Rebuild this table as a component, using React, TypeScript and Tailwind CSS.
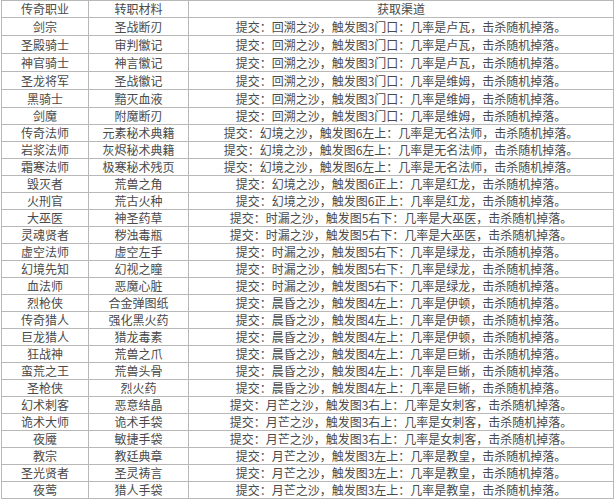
const rows: [string, string, string][] = [
  ["剑宗", "圣战断刃", "提交：回溯之沙，触发图3门口：几率是卢瓦，击杀随机掉落。"],
  ["圣殿骑士", "审判徽记", "提交：回溯之沙，触发图3门口：几率是卢瓦，击杀随机掉落。"],
  ["神官骑士", "神言徽记", "提交：回溯之沙，触发图3门口：几率是卢瓦，击杀随机掉落。"],
  ["圣龙将军", "圣战徽记", "提交：回溯之沙，触发图3门口：几率是维姆，击杀随机掉落。"],
  ["黑骑士", "黯灭血液", "提交：回溯之沙，触发图3门口：几率是维姆，击杀随机掉落。"],
  ["剑魔", "附魔断刃", "提交：回溯之沙，触发图3门口：几率是维姆，击杀随机掉落。"],
  ["传奇法师", "元素秘术典籍", "提交：幻境之沙，触发图6左上：几率是无名法师，击杀随机掉落。"],
  ["岩浆法师", "灰烬秘术典籍", "提交：幻境之沙，触发图6左上：几率是无名法师，击杀随机掉落。"],
  ["霜寒法师", "极寒秘术残页", "提交：幻境之沙，触发图6左上：几率是无名法师，击杀随机掉落。"],
  ["毁灭者", "荒兽之角", "提交：幻境之沙，触发图6正上：几率是红龙，击杀随机掉落。"],
  ["火刑官", "荒古火种", "提交：幻境之沙，触发图6正上：几率是红龙，击杀随机掉落。"],
  ["大巫医", "神圣药草", "提交：时漏之沙，触发图5右下：几率是大巫医，击杀随机掉落。"],
  ["灵魂贤者", "秽浊毒瓶", "提交：时漏之沙，触发图5右下：几率是大巫医，击杀随机掉落。"],
  ["虚空法师", "虚空左手", "提交：时漏之沙，触发图5右下：几率是绿龙，击杀随机掉落。"],
  ["幻境先知", "幻视之瞳", "提交：时漏之沙，触发图5右下：几率是绿龙，击杀随机掉落。"],
  ["血法师", "恶魔心脏", "提交：时漏之沙，触发图5右下：几率是绿龙，击杀随机掉落。"],
  ["烈枪侠", "合金弹图纸", "提交：晨昏之沙，触发图4左上：几率是伊顿，击杀随机掉落。"],
  ["传奇猎人", "强化黑火药", "提交：晨昏之沙，触发图4左上：几率是伊顿，击杀随机掉落。"],
  ["巨龙猎人", "猎龙毒素", "提交：晨昏之沙，触发图4左上：几率是伊顿，击杀随机掉落。"],
  ["狂战神", "荒兽之爪", "提交：晨昏之沙，触发图4左上：几率是巨蜥，击杀随机掉落。"],
  ["蛮荒之王", "荒兽头骨", "提交：晨昏之沙，触发图4左上：几率是巨蜥，击杀随机掉落。"],
  ["圣枪侠", "烈火药", "提交：晨昏之沙，触发图4左上：几率是巨蜥，击杀随机掉落。"],
  ["幻术刺客", "恶意结晶", "提交：月芒之沙，触发图3右上：几率是女刺客，击杀随机掉落。"],
  ["诡术大师", "诡术手袋", "提交：月芒之沙，触发图3右上：几率是女刺客，击杀随机掉落。"],
  ["夜魇", "敏捷手袋", "提交：月芒之沙，触发图3右上：几率是女刺客，击杀随机掉落。"],
  ["教宗", "教廷典章", "提交：月芒之沙，触发图3左上：几率是教皇，击杀随机掉落。"],
  ["圣光贤者", "圣灵祷言", "提交：月芒之沙，触发图3左上：几率是教皇，击杀随机掉落。"],
  ["夜莺", "猎人手袋", "提交：月芒之沙，触发图3左上：几率是教皇，击杀随机掉落。"],
];

const Row = ({ cells, tall }: { cells: [string, string, string]; tall?: boolean }) => (
  <div
    className={`grid grid-cols-[87px_100px_1fr] border-b border-[#b8b8b8] ${
      tall ? "h-[18px]" : "h-[17px]"
    }`}
  >
    {cells.map((c, i) => (
      <div
        key={i}
        className="flex items-center justify-center whitespace-nowrap border-r border-[#b8b8b8] leading-none"
      >
        {c}
      </div>
    ))}
  </div>
);

export default function App() {
  return (
    <div
      className="w-[615px] h-[500px] bg-white overflow-hidden text-[12px] text-[#4a4a4a] pl-[1px]"
      style={{ fontFamily: '"Microsoft YaHei", "Noto Sans CJK SC", sans-serif' }}
    >
      <div className="w-[613px] border-l border-t border-[#b8b8b8]">
        <Row cells={["传奇职业", "转职材料", "获取渠道"]} />
        {rows.map((r, i) => (
          <Row key={i} cells={r} tall={i < 5} />
        ))}
      </div>
    </div>
  );
}
